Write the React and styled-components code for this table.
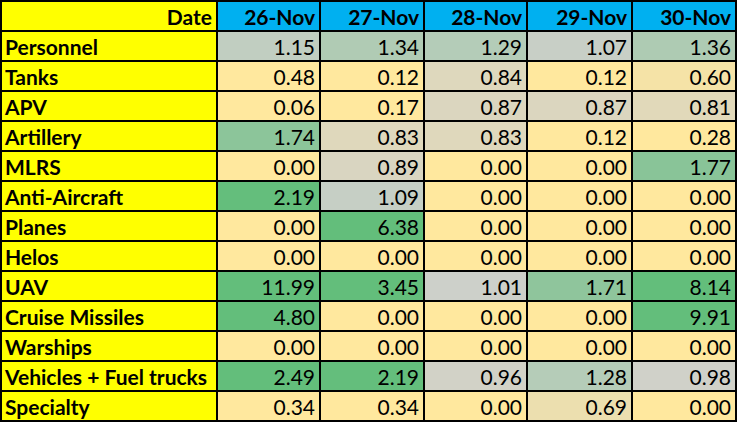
import React from "react";
import styled, { createGlobalStyle } from "styled-components";

const GlobalStyle = createGlobalStyle`
  html, body {
    margin: 0;
    padding: 0;
    background: #ffffff;
  }
  body {
    font-family: "Lato", "Liberation Sans", sans-serif;
    color: #000;
  }
`;

const Sheet = styled.div`
  display: grid;
  grid-template-columns: 214px 101px 102px 101px 103px 102px;
  grid-auto-rows: 28px;
  gap: 2px;
  padding: 2px;
  width: max-content;
  background: #000;
`;

const Cell = styled.div`
  display: flex;
  align-items: flex-end;
  justify-content: ${(p) => (p.$left ? "flex-start" : "flex-end")};
  padding: 0 ${(p) => (p.$left ? "0" : "4px")} 3px ${(p) => (p.$left ? "3px" : "0")};
  font-size: 21px;
  line-height: 1;
  white-space: nowrap;
  overflow: hidden;
  font-weight: ${(p) => (p.$bold ? 700 : 400)};
  background: ${(p) => p.$bg || "#ffe89e"};
`;

const dates = ["26-Nov", "27-Nov", "28-Nov", "29-Nov", "30-Nov"];

const rows = [
  ["Personnel", [1.15, 1.34, 1.29, 1.07, 1.36]],
  ["Tanks", [0.48, 0.12, 0.84, 0.12, 0.6]],
  ["APV", [0.06, 0.17, 0.87, 0.87, 0.81]],
  ["Artillery", [1.74, 0.83, 0.83, 0.12, 0.28]],
  ["MLRS", [0.0, 0.89, 0.0, 0.0, 1.77]],
  ["Anti-Aircraft", [2.19, 1.09, 0.0, 0.0, 0.0]],
  ["Planes", [0.0, 6.38, 0.0, 0.0, 0.0]],
  ["Helos", [0.0, 0.0, 0.0, 0.0, 0.0]],
  ["UAV", [11.99, 3.45, 1.01, 1.71, 8.14]],
  ["Cruise Missiles", [4.8, 0.0, 0.0, 0.0, 9.91]],
  ["Warships", [0.0, 0.0, 0.0, 0.0, 0.0]],
  ["Vehicles + Fuel trucks", [2.49, 2.19, 0.96, 1.28, 0.98]],
  ["Specialty", [0.34, 0.34, 0.0, 0.69, 0.0]],
];

// colour scale: pale yellow -> grey (~1.0) -> green (>= 2.2)
const stops = [
  [0, [255, 232, 158]],
  [0.5, [255, 232, 158]],
  [1.0, [206, 208, 203]],
  [2.2, [99, 190, 123]],
];

const scaleColor = (v) => {
  if (v >= stops[stops.length - 1][0]) {
    const c = stops[stops.length - 1][1];
    return `rgb(${c.join(",")})`;
  }
  for (let i = 1; i < stops.length; i++) {
    const [x1, c1] = stops[i];
    const [x0, c0] = stops[i - 1];
    if (v <= x1) {
      const t = (v - x0) / (x1 - x0);
      const c = c0.map((a, k) => Math.round(a + (c1[k] - a) * t));
      return `rgb(${c.join(",")})`;
    }
  }
  return "#ffe89e";
};

const App = () => (
  <>
    <GlobalStyle />
    <Sheet>
      <Cell $bold $bg="#ffff00">
        Date
      </Cell>
      {dates.map((d) => (
        <Cell key={d} $bold $bg="#00b0f0">
          {d}
        </Cell>
      ))}
      {rows.map(([label, values]) => (
        <React.Fragment key={label}>
          <Cell $left $bold $bg="#ffff00">
            {label}
          </Cell>
          {values.map((v, i) => (
            <Cell key={i} $bg={scaleColor(v)}>
              {v.toFixed(2)}
            </Cell>
          ))}
        </React.Fragment>
      ))}
    </Sheet>
  </>
);

export default App;
